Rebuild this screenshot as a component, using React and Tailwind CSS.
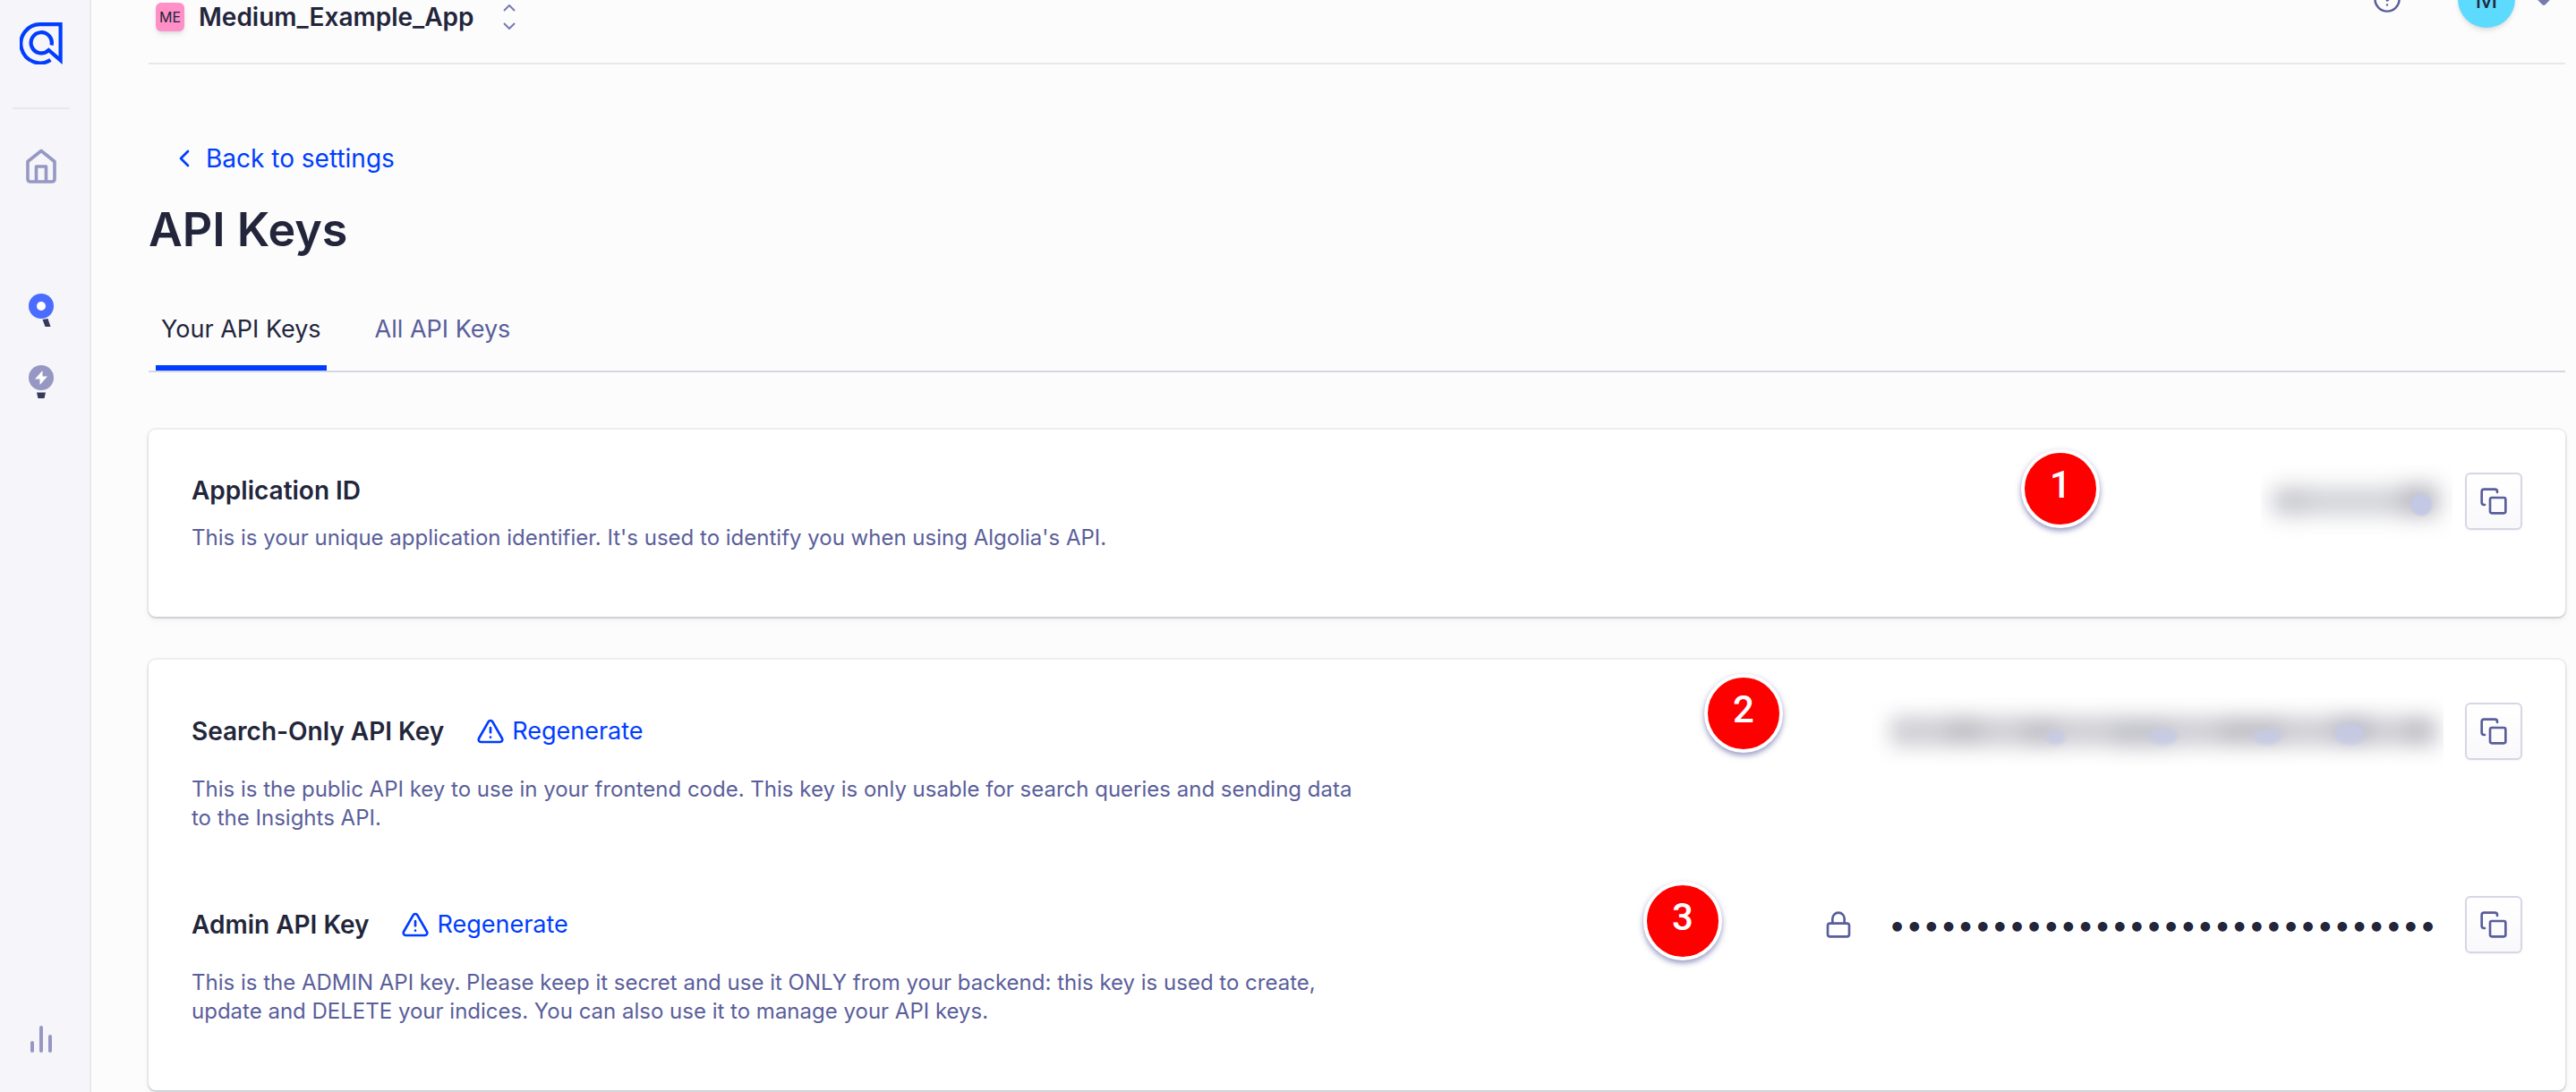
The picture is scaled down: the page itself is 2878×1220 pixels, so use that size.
import React from "react";
import { AlertTriangle, ChevronLeft, ChevronDown, Lock } from "lucide-react";

const Logo = () => (
  <svg width="48" height="48" viewBox="0 0 48 48" fill="none">
    <path
      d="M34.5 43 A21.6 21.6 0 1 1 24 3.2 H45.6 V43.4 L32.4 32 A11.6 11.6 0 1 1 35.5 26.5"
      stroke="#003dff"
      strokeWidth="4.2"
    />
  </svg>
);

const HomeIcon = () => (
  <svg width="36" height="40" viewBox="0 0 36 40" fill="none" stroke="#9698c3" strokeWidth="3.6" strokeLinejoin="round">
    <path d="M3 14.5 L18 2.5 L33 14.5 V34 Q33 37 30 37 H6 Q3 37 3 34 Z" />
    <path d="M12.5 37 V20 H23.5 V37" />
  </svg>
);

const SearchIcon = () => (
  <svg width="28" height="38" viewBox="0 0 28 38">
    <circle cx="14" cy="14" r="14" fill="#4a6dff" />
    <circle cx="14" cy="14" r="5" fill="#fff" />
    <path d="M15.5 29 L21.5 28 L24.5 37 H18.5 Z" fill="#36395a" />
  </svg>
);

const BulbIcon = () => (
  <svg width="28" height="38" viewBox="0 0 28 38">
    <circle cx="14" cy="14" r="14" fill="#9698c3" />
    <path d="M15.5 6 L7 15.5 H12.5 V22 L21 12.5 H15.5 Z" fill="#fff" />
    <path d="M9 30.5 H19 L17.5 37 H10.5 Z" fill="#36395a" />
  </svg>
);

const ChartIcon = () => (
  <svg width="24" height="30" viewBox="0 0 24 30" stroke="#9698c3" strokeWidth="4" strokeLinecap="round">
    <path d="M2 19 V28 M12 2 V28 M22 12 V28" />
  </svg>
);

const SelectorIcon = () => (
  <svg width="14" height="28" viewBox="0 0 14 28" fill="none" stroke="#777aaf" strokeWidth="2">
    <path d="M1 7 L7 1 L13 7 M1 21 L7 27 L13 21" />
  </svg>
);

const HelpIcon = () => (
  <svg width="30" height="30" viewBox="0 0 30 30" fill="none" stroke="#5a5e9a" strokeWidth="2.4" strokeLinecap="round">
    <circle cx="15" cy="15" r="13.6" />
    <path d="M11 11 Q12 7.5 15 7.5 Q19 7.5 19 11 Q19 14 15 16.5 M15 21.4 V21.5" />
  </svg>
);

const CopyIcon = () => (
  <svg width="32" height="32" viewBox="0 0 24 24" fill="none" stroke="#5a5e9a" strokeWidth="2" strokeLinecap="round" strokeLinejoin="round">
    <rect x="9" y="9" width="13" height="13" rx="1.5" />
    <path d="M4.5 15H4a2 2 0 0 1-2-2V4a2 2 0 0 1 2-2h9a2 2 0 0 1 2 2v.5" />
  </svg>
);

const BlurredId = () => (
  <svg width="214" height="84" viewBox="0 0 214 84" className="mr-[14px]">
    <defs>
      <filter id="idBlur" x="-20%" y="-150%" width="140%" height="400%">
        <feGaussianBlur stdDeviation="12" />
      </filter>
      <filter id="idSpot">
        <feGaussianBlur stdDeviation="1.5" />
      </filter>
    </defs>
    <g filter="url(#idBlur)">
      <rect x="12" y="27" width="184" height="30" fill="#cfd0d5" />
      <rect x="20" y="27" width="30" height="30" fill="#c4c5cb" />
      <rect x="156" y="24" width="42" height="34" fill="#b8b8c0" />
    </g>
    <ellipse cx="179" cy="46" rx="12" ry="12" fill="#c3c8e4" filter="url(#idSpot)" />
  </svg>
);

const BlurredKey = () => (
  <svg width="640" height="76" viewBox="0 0 640 76" className="mr-6">
    <defs>
      <filter id="keyBlur" x="-10%" y="-150%" width="120%" height="400%">
        <feGaussianBlur stdDeviation="11" />
      </filter>
      <filter id="keySpot">
        <feGaussianBlur stdDeviation="2" />
      </filter>
    </defs>
    <g filter="url(#keyBlur)">
      <rect x="22" y="21" width="612" height="34" fill="#cfcfd5" />
      <rect x="84" y="22" width="40" height="30" fill="#bfbfc6" />
      <rect x="170" y="24" width="40" height="30" fill="#bfbfc6" />
      <rect x="270" y="24" width="66" height="32" fill="#c2c2ca" />
      <rect x="390" y="22" width="70" height="30" fill="#bfbfc6" />
      <rect x="516" y="20" width="44" height="32" fill="#bbbbc5" />
      <rect x="596" y="22" width="28" height="30" fill="#bfbfc6" />
    </g>
    <g fill="#c5cae6" fillOpacity="0.8" filter="url(#keySpot)">
      <ellipse cx="207" cy="45" rx="11" ry="8" />
      <ellipse cx="327" cy="44" rx="16" ry="9" />
      <ellipse cx="443" cy="44" rx="16" ry="9" />
      <ellipse cx="535" cy="41" rx="17" ry="12" />
    </g>
  </svg>
);

const CopyButton = ({ label }) => (
  <button
    type="button"
    aria-label={label}
    className="flex size-16 shrink-0 items-center justify-center rounded-md border-2 border-[#d6d6e7] bg-linear-to-b from-white to-[#f9f9fc] shadow-xs"
  >
    <CopyIcon />
  </button>
);

const Regenerate = () => (
  <button type="button" className="flex items-center gap-2 text-[27px] leading-10 text-[#003dff]">
    <AlertTriangle size={32} strokeWidth={2} />
    Regenerate
  </button>
);

const Marker = ({ number, className }) => (
  <span
    className={`absolute flex size-[88px] items-start justify-center rounded-full border-4 border-white bg-[#ff0000] pt-4 font-[Roboto] text-[42px] leading-10 font-medium text-white shadow-[0_3px_6px_rgba(60,66,140,0.55)] ${className}`}
  >
    {number}
  </span>
);

const Card = ({ children }) => (
  <section className="relative rounded-lg bg-white px-12 pt-12 pb-[72px] shadow-[0_0_0_2px_rgba(35,38,59,0.06),0_2px_2px_rgba(35,38,59,0.12),0_4px_8px_rgba(35,38,59,0.05)]">
    {children}
  </section>
);

const KeyRow = ({ title, description, copyLabel, children }) => (
  <div>
    <div className="flex h-16 items-center">
      <h2 className="mr-9 text-[28px] leading-10 font-semibold">{title}</h2>
      <Regenerate />
      <div className="ml-auto flex items-center">
        {children}
        <CopyButton label={copyLabel} />
      </div>
    </div>
    <p className="mt-[17px] max-w-[1310px] text-2xl leading-8 text-[#5a5e9a]">{description}</p>
  </div>
);

const Sidebar = () => (
  <nav className="flex w-[102px] shrink-0 flex-col items-center border-r-2 border-[#e8e8ee] bg-[#f5f5fa] pt-6 pr-2 pb-11">
    <a href="#" aria-label="Algolia">
      <Logo />
    </a>
    <hr className="mt-12 w-16 border-t-2 border-[#e8e8ec]" />
    <a href="#" aria-label="Home" className="mt-11">
      <HomeIcon />
    </a>
    <a href="#" aria-label="Search" className="mt-[122px]">
      <SearchIcon />
    </a>
    <a href="#" aria-label="Recommend" className="mt-[42px]">
      <BulbIcon />
    </a>
    <a href="#" aria-label="Usage" className="mt-auto">
      <ChartIcon />
    </a>
  </nav>
);

const Header = () => (
  <header className="flex h-[72px] items-start justify-between border-b-2 border-[#e8e8ec] pr-2 pl-2">
    <button type="button" className="flex h-[38px] items-center">
      <span className="flex size-8 items-center justify-center rounded-md bg-[#ff8fc7] text-base shadow-md">ME</span>
      <span className="ml-4 text-[28px] leading-8 font-semibold">Medium_Example_App</span>
      <span className="ml-8">
        <SelectorIcon />
      </span>
    </button>
    <div className="-mt-[33px] flex h-16 items-center">
      <button type="button" aria-label="Help" className="mr-16">
        <HelpIcon />
      </button>
      <button type="button" aria-label="Account" className="flex items-center gap-4">
        <span className="flex size-16 items-center justify-center rounded-full bg-[#5cdbff] text-[28px] shadow-md">
          M
        </span>
        <ChevronDown size={32} strokeWidth={4} color="#777aaf" />
      </button>
    </div>
  </header>
);

const App = () => {
  return (
    <div className="flex min-h-screen overflow-hidden bg-[#fcfcfd] font-[Inter,sans-serif] text-[#23263b]">
      <Sidebar />
      <main className="min-w-0 flex-1 pr-3 pl-16">
        <Header />

        <a href="#" className="mt-[85px] flex w-fit items-center gap-2 pl-6 text-[28px] leading-10 text-[#003dff]">
          <ChevronLeft size={32} strokeWidth={2} />
          Back to settings
        </a>
        <h1 className="mt-7 text-[52px] leading-16 font-semibold">API Keys</h1>

        <div role="tablist" className="mt-[59px] flex gap-12 border-b-2 border-[#d6d6e7] px-2 text-[27px] leading-10">
          <button type="button" role="tab" aria-selected="true" className="border-b-6 border-[#003dff] px-1.5 pb-5">
            Your API Keys
          </button>
          <button type="button" role="tab" aria-selected="false" className="border-b-6 border-transparent px-1.5 pb-5 text-[#5a5e9a]">
            All API Keys
          </button>
        </div>

        <div className="flex flex-col gap-12 pt-16">
          <Card>
            <div className="flex items-start justify-between">
              <div>
                <h2 className="text-[28px] leading-10 font-semibold">Application ID</h2>
                <p className="mt-[17px] text-2xl leading-8 text-[#5a5e9a]">
                  This is your unique application identifier. It's used to identify you when using Algolia's API.
                </p>
              </div>
              <div className="flex h-16 items-center">
                <BlurredId />
                <CopyButton label="Copy Application ID" />
              </div>
            </div>
            <Marker number="1" className="top-[22px] right-[520px]" />
          </Card>

          <Card>
            <KeyRow
              title="Search-Only API Key"
              copyLabel="Copy Search-Only API Key"
              description="This is the public API key to use in your frontend code. This key is only usable for search queries and sending data to the Insights API."
            >
              <BlurredKey />
            </KeyRow>
            <div className="mt-[71px]">
              <KeyRow
                title="Admin API Key"
                copyLabel="Copy Admin API Key"
                description="This is the ADMIN API key. Please keep it secret and use it ONLY from your backend: this key is used to create, update and DELETE your indices. You can also use it to manage your API keys."
              >
                <Lock size={32} strokeWidth={2} color="#5a5e9a" />
                <input
                  type="password"
                  aria-label="Admin API Key"
                  readOnly
                  value={"0".repeat(32)}
                  className="mr-6 ml-10 w-[620px] bg-transparent text-[34px] leading-10 outline-none"
                />
              </KeyRow>
            </div>
            <Marker number="2" className="top-4 right-[874px]" />
            <Marker number="3" className="top-[248px] right-[942px]" />
          </Card>
        </div>
      </main>
    </div>
  );
};

export default App;
